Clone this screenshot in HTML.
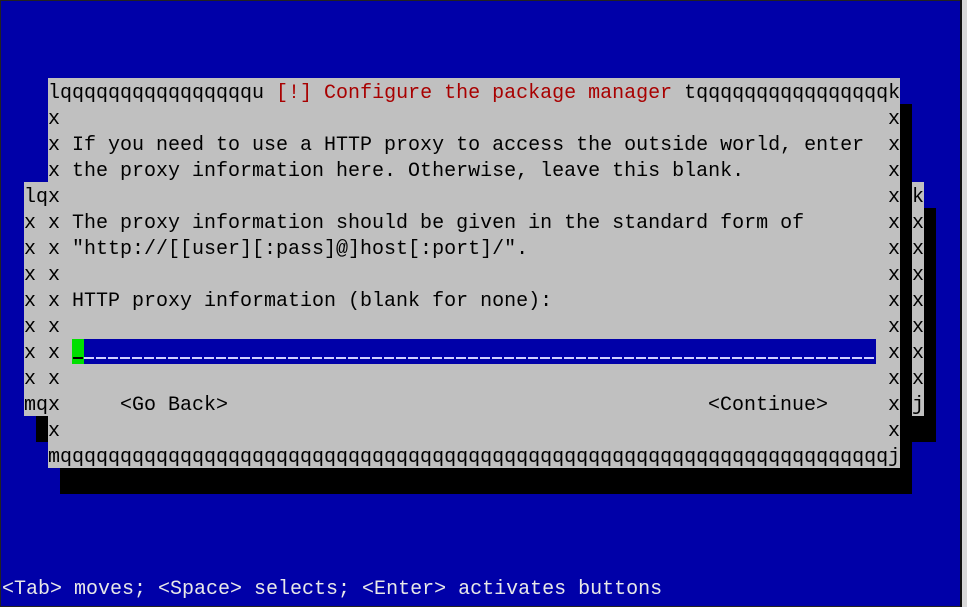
<!DOCTYPE html>
<html><head><meta charset="utf-8"><style>
html,body{margin:0;padding:0;}
body{width:967px;height:607px;overflow:hidden;background:#0000a8;position:relative;font-family:"Liberation Mono","DejaVu Sans Mono",monospace;font-size:20px;}
.b{position:absolute;}
.t{position:absolute;white-space:pre;line-height:26px;height:26px;color:#000;margin-top:3px;}
.red{color:#a80000;}
</style></head><body>
<div class="b" style="left:0;top:0;width:967px;height:1px;background:#222"></div>
<div class="b" style="left:0;top:0;width:1px;height:607px;background:#222"></div>
<div class="b" style="left:0;top:606px;width:967px;height:1px;background:#222"></div>
<div class="b" style="left:960px;top:0;width:2px;height:607px;background:#111"></div>
<div class="b" style="left:962px;top:0;width:5px;height:607px;background:#d8d8d8"></div>

<div class="b" style="left:36px;top:208px;width:900px;height:234px;background:#000"></div>
<div class="b" style="left:24px;top:182px;width:900px;height:234px;background:#c0c0c0"></div>
<div class="b" style="left:60px;top:104px;width:852px;height:390px;background:#000"></div>
<div class="b" style="left:48px;top:78px;width:852px;height:390px;background:#c0c0c0"></div>
<div class="b" style="left:72px;top:339px;width:804px;height:25px;background:#0000a8"></div>
<div class="b" style="left:84px;top:357px;width:792px;height:2px;background:repeating-linear-gradient(90deg,#d0d0ff 0 10px,transparent 10px 12px)"></div>
<div class="b" style="left:72px;top:339px;width:12px;height:25px;background:#00e000"></div>
<div class="b" style="left:73px;top:357px;width:10px;height:2px;background:#000"></div>

<div class="t" style="left:24px;top:182px">lq</div>
<div class="t" style="left:912px;top:182px">k</div>
<div class="t" style="left:24px;top:208px">x</div><div class="t" style="left:912px;top:208px">x</div>
<div class="t" style="left:24px;top:234px">x</div><div class="t" style="left:912px;top:234px">x</div>
<div class="t" style="left:24px;top:260px">x</div><div class="t" style="left:912px;top:260px">x</div>
<div class="t" style="left:24px;top:286px">x</div><div class="t" style="left:912px;top:286px">x</div>
<div class="t" style="left:24px;top:312px">x</div><div class="t" style="left:912px;top:312px">x</div>
<div class="t" style="left:24px;top:338px">x</div><div class="t" style="left:912px;top:338px">x</div>
<div class="t" style="left:24px;top:364px">x</div><div class="t" style="left:912px;top:364px">x</div>
<div class="t" style="left:24px;top:390px">mq</div><div class="t" style="left:912px;top:390px">j</div>

<div class="t" style="left:48px;top:78px">lqqqqqqqqqqqqqqqqu<span class="red"> [!] Configure the package manager </span>tqqqqqqqqqqqqqqqqk</div>
<div class="t" style="left:48px;top:104px">x</div><div class="t" style="left:888px;top:104px">x</div>
<div class="t" style="left:48px;top:130px">x If you need to use a HTTP proxy to access the outside world, enter  x</div>
<div class="t" style="left:48px;top:156px">x the proxy information here. Otherwise, leave this blank.</div><div class="t" style="left:888px;top:156px">x</div>
<div class="t" style="left:48px;top:182px">x</div><div class="t" style="left:888px;top:182px">x</div>
<div class="t" style="left:48px;top:208px">x The proxy information should be given in the standard form of</div><div class="t" style="left:888px;top:208px">x</div>
<div class="t" style="left:48px;top:234px">x "http://[[user][:pass]@]host[:port]/".</div><div class="t" style="left:888px;top:234px">x</div>
<div class="t" style="left:48px;top:260px">x</div><div class="t" style="left:888px;top:260px">x</div>
<div class="t" style="left:48px;top:286px">x HTTP proxy information (blank for none):</div><div class="t" style="left:888px;top:286px">x</div>
<div class="t" style="left:48px;top:312px">x</div><div class="t" style="left:888px;top:312px">x</div>
<div class="t" style="left:48px;top:338px">x</div><div class="t" style="left:888px;top:338px">x</div>
<div class="t" style="left:48px;top:364px">x</div><div class="t" style="left:888px;top:364px">x</div>
<div class="t" style="left:48px;top:390px">x     &lt;Go Back&gt;</div><div class="t" style="left:708px;top:390px">&lt;Continue&gt;</div><div class="t" style="left:888px;top:390px">x</div>
<div class="t" style="left:48px;top:416px">x</div><div class="t" style="left:888px;top:416px">x</div>
<div class="t" style="left:48px;top:442px">mqqqqqqqqqqqqqqqqqqqqqqqqqqqqqqqqqqqqqqqqqqqqqqqqqqqqqqqqqqqqqqqqqqqqqj</div>

<div class="t" style="left:2px;top:574px;color:#e8e8e8">&lt;Tab&gt; moves; &lt;Space&gt; selects; &lt;Enter&gt; activates buttons</div>
</body></html>
